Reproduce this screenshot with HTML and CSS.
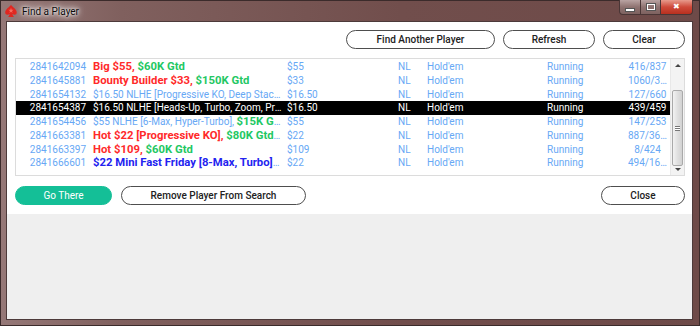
FILE: index.html
```html
<!DOCTYPE html>
<html lang="en">
<head>
  <meta charset="UTF-8" />
  <title>Find a Player</title>
  <link rel="stylesheet" href="styles.css">
</head>
<body>
  <div class="window">
    <div class="titlebar">
      <svg class="app-icon" width="14" height="14" viewBox="0 0 14 14">
        <path d="M7 0.8 C8.6 3.4 12.8 5.2 12.8 8.4 C12.8 10.5 10.5 11.4 8.4 10 C8.6 11.2 9.2 12.3 10 13 L4 13 C4.8 12.3 5.4 11.2 5.6 10 C3.5 11.4 1.2 10.5 1.2 8.4 C1.2 5.2 5.4 3.4 7 0.8 Z" fill="#e0261f"/>
        <path d="M7 3.6 L7.6 5.7 L9.7 5.7 L8 7 L8.6 9 L7 7.8 L5.4 9 L6 7 L4.3 5.7 L6.4 5.7 Z" fill="#ff8a7a" opacity="0.7"/>
      </svg>
      <span class="title">Find a Player</span>
      <div class="win-controls">
        <span class="win-btn min"><i></i></span>
        <span class="win-btn max"><i></i></span>
        <span class="win-btn close">&#x2716;</span>
      </div>
    </div>

    <div class="frame">
      <div class="content">
        <div class="top-actions">
          <button class="btn btn-find">Find Another Player</button>
          <button class="btn btn-refresh">Refresh</button>
          <button class="btn btn-clear">Clear</button>
        </div>

        <div class="list">
          <div class="rows">
            <div class="row">
              <span class="c-id">2841642094</span>
              <span class="c-name"><b class="red">Big $55</b><b class="red">, </b><b class="green">$60K Gtd</b></span>
              <span class="c-buyin">$55</span>
              <span class="c-limit">NL</span>
              <span class="c-game">Hold'em</span>
              <span class="c-status">Running</span>
              <span class="c-count">416/837</span>
            </div>
            <div class="row">
              <span class="c-id">2841645881</span>
              <span class="c-name"><b class="red">Bounty Builder $33, </b><b class="green">$150K Gtd</b></span>
              <span class="c-buyin">$33</span>
              <span class="c-limit">NL</span>
              <span class="c-game">Hold'em</span>
              <span class="c-status">Running</span>
              <span class="c-count">1060/3572</span>
            </div>
            <div class="row">
              <span class="c-id">2841654132</span>
              <span class="c-name">$16.50 NLHE [Progressive KO, Deep Stack, Turbo]</span>
              <span class="c-buyin">$16.50</span>
              <span class="c-limit">NL</span>
              <span class="c-game">Hold'em</span>
              <span class="c-status">Running</span>
              <span class="c-count">127/660</span>
            </div>
            <div class="row selected">
              <span class="c-id">2841654387</span>
              <span class="c-name">$16.50 NLHE [Heads-Up, Turbo, Zoom, Progressive KO]</span>
              <span class="c-buyin">$16.50</span>
              <span class="c-limit">NL</span>
              <span class="c-game">Hold'em</span>
              <span class="c-status">Running</span>
              <span class="c-count">439/459</span>
            </div>
            <div class="row">
              <span class="c-id">2841654456</span>
              <span class="c-name">$55 NLHE [6-Max, Hyper-Turbo], <b class="green">$15K Gtd</b></span>
              <span class="c-buyin">$55</span>
              <span class="c-limit">NL</span>
              <span class="c-game">Hold'em</span>
              <span class="c-status">Running</span>
              <span class="c-count">147/253</span>
            </div>
            <div class="row">
              <span class="c-id">2841663381</span>
              <span class="c-name"><b class="red">Hot $22 [Progressive KO]</b><b class="red">, </b><b class="green">$80K Gtd</b><b class="green"> Special</b></span>
              <span class="c-buyin">$22</span>
              <span class="c-limit">NL</span>
              <span class="c-game">Hold'em</span>
              <span class="c-status">Running</span>
              <span class="c-count">887/3621</span>
            </div>
            <div class="row">
              <span class="c-id">2841663397</span>
              <span class="c-name"><b class="red">Hot $109</b><b class="red">, </b><b class="green">$60K Gtd</b></span>
              <span class="c-buyin">$109</span>
              <span class="c-limit">NL</span>
              <span class="c-game">Hold'em</span>
              <span class="c-status">Running</span>
              <span class="c-count">8/424</span>
            </div>
            <div class="row">
              <span class="c-id">2841666601</span>
              <span class="c-name"><b class="blue">$22 Mini Fast Friday [8-Max, Turbo], Progressive</b></span>
              <span class="c-buyin">$22</span>
              <span class="c-limit">NL</span>
              <span class="c-game">Hold'em</span>
              <span class="c-status">Running</span>
              <span class="c-count">494/1612</span>
            </div>
          </div>

          <div class="scrollbar">
            <span class="arrow up"></span>
            <span class="thumb"><i></i></span>
            <span class="arrow down"></span>
          </div>
        </div>

        <div class="bottom-actions">
          <button class="btn btn-go">Go There</button>
          <button class="btn btn-remove">Remove Player From Search</button>
          <button class="btn btn-close">Close</button>
        </div>
      </div>
      <div class="empty"></div>
    </div>
  </div>
</body>
</html>
```

FILE: styles.css
```css
body { margin: 0; width: 700px; height: 326px; overflow: hidden; background: #6e4c4a; font-family: Roboto, Arial, sans-serif; }

.window {
  width: 700px; height: 326px; box-sizing: border-box;
  display: flex; flex-direction: column;
  background: linear-gradient(to right, #957877 0px, #80605e 120px, #714e4c 400px, #6e4a48 700px);
  border: 1px solid #3b2b2b;
}

/* barra de título */
.titlebar { height: 20px; display: flex; align-items: center; position: relative; }
.app-icon { margin: 0 4px 0 3px; }
.title {
  font-size: 10px; color: #0d0d0d;
  text-shadow: 0 0 6px #fff, 0 0 10px #fff, 0 0 3px #fff;
}
.win-controls { position: absolute; top: -1px; right: 6px; display: flex; height: 15px; }
.win-btn {
  display: flex; align-items: center; justify-content: center;
  height: 14px; border: 1px solid #4a3636; border-top: none;
  background: linear-gradient(#b9a3a2, #8f7371 50%, #7e6260);
}
.win-btn.min { width: 20px; border-radius: 0 0 0 4px; }
.win-btn.max { width: 19px; border-left: none; }
.win-btn.close {
  width: 31px; border-left: none; border-radius: 0 0 4px 0;
  background: linear-gradient(#e79a8c, #cf4a3a 50%, #b8301f);
  color: #fff; font-size: 8px; line-height: 1;
}
.win-btn.min i { width: 8px; height: 2px; background: #fff; border: 1px solid #555; margin-top: 5px; }
.win-btn.max i { width: 6px; height: 4px; border: 1px solid #fff; outline: 1px solid #555; }

.frame {
  flex: 1; display: flex; flex-direction: column;
  margin: 0 6px 5px 5px;
  border: 1px solid #4d3a3a;
}

.content { background: #fff; display: flex; flex-direction: column; padding: 8px 7px 9px 8px; }

.top-actions { display: flex; justify-content: flex-end; gap: 8px; }

.btn {
  height: 19px; padding: 0; box-sizing: border-box;
  border: 1px solid #4e4e4e; border-radius: 10px;
  background: #fff; color: #222;
  font-family: Roboto, Arial, sans-serif; font-size: 10px; font-weight: 500;
}
.btn-find { width: 149px; }
.btn-refresh { width: 92px; }
.btn-clear { width: 82px; }
.btn-go { width: 97px; background: #14bf97; border-color: #14bf97; color: #fff; font-weight: 400; }
.btn-remove { width: 185px; }
.btn-close { width: 84px; margin-left: auto; }

/* lista de torneios */
.list {
  margin-top: 9px; height: 118px; box-sizing: border-box;
  border: 1px solid #dcdcdc; display: flex;
}
.rows { flex: 1; padding-top: 1px; }
.row { display: flex; height: 13.75px; line-height: 13.75px; font-size: 10px; color: #67a8f5; white-space: nowrap; }
.row > span { overflow: hidden; text-overflow: ellipsis; }
.row.selected { background: #000; color: #fff; }
.row b { font-size: 11.3px; }
.c-id { width: 70px; text-align: right; padding-right: 7px; }
.c-name { width: 189px; padding-right: 5px; }
.c-buyin { width: 111px; }
.c-limit { width: 29px; }
.c-game { width: 120px; }
.c-status { width: 81px; }
.c-count { width: 39px; text-align: center; }
.red { color: #ff2a2a; }
.green { color: #23c763; }
.blue { color: #2323f0; }

.scrollbar {
  width: 13px; display: flex; flex-direction: column; align-items: center;
  background: #f3f3f3; border-left: 1px solid #e8e8e8;
}
.arrow { width: 0; height: 0; border-left: 3px solid transparent; border-right: 3px solid transparent; margin: 5px 0; }
.arrow.up { border-bottom: 3px solid #444; }
.arrow.down { border-top: 3px solid #444; margin-top: auto; margin-bottom: 4px; }
.thumb {
  width: 11px; height: 76px; margin-top: 18px; box-sizing: border-box;
  border: 1px solid #a9a9a9; border-radius: 2px;
  background: linear-gradient(to right, #f2f2f2, #e0e0e0 50%, #d2d2d2);
  display: flex; align-items: center; justify-content: center;
}
.thumb i { width: 5px; height: 5px; border-top: 1px solid #777; border-bottom: 1px solid #777; box-sizing: border-box; background: linear-gradient(#fff 40%, #777 40%, #777 60%, #fff 60%); }

.bottom-actions { display: flex; gap: 9px; margin-top: 10px; }

.empty { flex: 1; background: #efefef; }
```
